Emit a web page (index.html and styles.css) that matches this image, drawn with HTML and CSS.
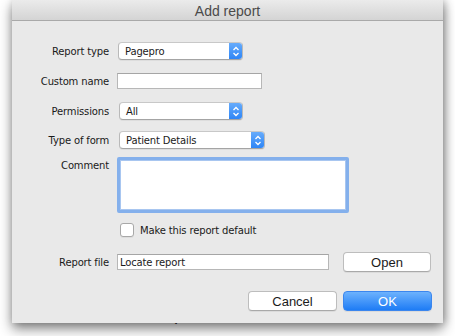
FILE: index.html
```html
<!DOCTYPE html>
<html>
<head>
<meta charset="utf-8">
<link rel="stylesheet" href="styles.css">
</head>
<body>
<div class="stage">
  <div class="dialog">
    <div class="titlebar">Add report</div>
    <div class="content">
      <div class="row r1">
        <label class="lbl">Report type</label>
        <div class="select w125"><span class="val">Pagepro</span><span class="arrow"><svg width="8" height="11" viewBox="0 0 8 11"><path d="M1.5 4 L4 1.5 L6.5 4 M1.5 7 L4 9.5 L6.5 7" fill="none" stroke="#fff" stroke-width="1.3"/></svg></span></div>
      </div>
      <div class="row r2">
        <label class="lbl">Custom name</label>
        <div class="input w145"></div>
      </div>
      <div class="row r3">
        <label class="lbl">Permissions</label>
        <div class="select w124 sh1"><span class="val">All</span><span class="arrow"><svg width="8" height="11" viewBox="0 0 8 11"><path d="M1.5 4 L4 1.5 L6.5 4 M1.5 7 L4 9.5 L6.5 7" fill="none" stroke="#fff" stroke-width="1.3"/></svg></span></div>
      </div>
      <div class="row r4">
        <label class="lbl">Type of form</label>
        <div class="select w146 sh1"><span class="val">Patient Details</span><span class="arrow"><svg width="8" height="11" viewBox="0 0 8 11"><path d="M1.5 4 L4 1.5 L6.5 4 M1.5 7 L4 9.5 L6.5 7" fill="none" stroke="#fff" stroke-width="1.3"/></svg></span></div>
      </div>
      <div class="row r5">
        <label class="lbl top">Comment</label>
        <div class="textarea"></div>
      </div>
      <div class="row r6">
        <span class="lbl"></span>
        <span class="check"></span>
        <span class="checktext">Make this report default</span>
      </div>
      <div class="row r7">
        <label class="lbl">Report file</label>
        <div class="input w212"><span class="val">Locate report</span></div>
        <button class="btn open">Open</button>
      </div>
      <div class="row r8">
        <button class="btn cancel">Cancel</button>
        <button class="btn ok">OK</button>
      </div>
    </div>
  </div>
  <div class="under">
    <span class="u1">Item shelf life in days</span>
    <span class="u2">312</span>
  </div>
</div>
</body>
</html>
```

FILE: styles.css
```css
html, body {
  margin: 0;
  padding: 0;
  background: #ffffff;
  width: 455px;
  height: 336px;
  overflow: hidden;
}
.stage {
  position: relative;
  width: 455px;
  height: 336px;
}
.dialog {
  position: relative;
  z-index: 2;
  margin-left: 12px;
  width: 431px;
  height: 323px;
  background: #e9e9e9;
  box-shadow: 0 6px 12px rgba(0,0,0,0.45), 2px 0 8px rgba(0,0,0,0.25);
  font-family: "DejaVu Sans", "Liberation Sans", sans-serif;
  font-size: 10px;
  letter-spacing: -0.15px;
  color: #1a1a1a;
}
.titlebar {
  height: 20px;
  border-bottom: 1px solid #a9a9a9;
  background: linear-gradient(#ebebeb, #d4d4d4);
  text-align: center;
  font-family: "Liberation Sans", Arial, sans-serif;
  font-size: 14px;
  letter-spacing: 0;
  line-height: 22px;
  color: #4a4a4a;
}
.content {
  padding-top: 21px;
}
.row {
  display: flex;
  align-items: center;
}
.lbl {
  width: 97px;
  text-align: right;
  margin-right: 8px;
  flex: none;
  white-space: nowrap;
}
.lbl.top {
  align-self: flex-start;
  padding-top: 3px;
}
.r1 { height: 18px; }
.r2 { height: 16px; margin-top: 13px; }
.r3 { height: 18px; margin-top: 13px; }
.r4 { height: 18px; margin-top: 11px; }
.r5 { height: 56px; margin-top: 8px; align-items: flex-start; }
.r6 { height: 14px; margin-top: 10px; }
.r7 { height: 20px; margin-top: 15px; }
.r8 { height: 20px; margin-top: 19px; justify-content: flex-end; padding-right: 11px; gap: 6px; }

.select {
  box-sizing: border-box;
  height: 18px;
  display: flex;
  align-items: center;
  justify-content: space-between;
  background: #fff;
  border: 1px solid #b9b9b9;
  border-top-color: #c8c8c8;
  border-bottom-color: #a4a4a4;
  border-radius: 4px;
  box-shadow: 0 1px 0 rgba(0,0,0,0.05);
  margin-left: 1px;
  overflow: hidden;
}
.sh1 { margin-left: 2px; }
.select .val {
  padding-left: 6px;
}
.arrow {
  width: 14px;
  height: 18px;
  margin-right: -1px;
  background: linear-gradient(#6aaefc, #2a83f6);
  display: flex;
  align-items: center;
  justify-content: center;
  border-radius: 0 4px 4px 0;
}
.w125 { width: 125px; }
.w124 { width: 124px; }
.w146 { width: 146px; }
.input {
  box-sizing: border-box;
  height: 16px;
  background: #fff;
  border: 1px solid #b7b7b7;
  border-top-color: #a5a5a5;
  display: flex;
  align-items: center;
}
.input .val { padding-left: 2px; }
.w145 { width: 145px; }
.w212 { width: 212px; }
.textarea {
  box-sizing: border-box;
  width: 232px;
  height: 56px;
  background: #fff;
  border: 3px solid #84b0ec;
  border-radius: 2px;
  box-shadow: inset 0 0 0 1px #a8c6f0;
}
.check {
  box-sizing: border-box;
  width: 14px;
  height: 14px;
  margin-left: 3px;
  background: #fff;
  border: 1px solid #a8a8a8;
  border-radius: 3px;
  box-shadow: 0 1px 0 rgba(0,0,0,0.05);
}
.checktext {
  margin-left: 6px;
}
.btn {
  box-sizing: border-box;
  height: 20px;
  width: 89px;
  padding: 0;
  font-family: "Liberation Sans", Arial, sans-serif;
  font-size: 13px;
  letter-spacing: 0;
  color: #1a1a1a;
  background: #fff;
  border: 1px solid #bdbdbd;
  border-bottom-color: #a9a9a9;
  border-radius: 4px;
  box-shadow: 0 1px 0 rgba(0,0,0,0.06);
}
.open { margin-left: 14px; width: 88px; }
.ok {
  color: #fff;
  border: 1px solid #3b86ee;
  background: linear-gradient(#6db2fd, #1e7cf5);
}
.under {
  position: relative;
  z-index: 1;
  margin-top: -10px;
  display: flex;
  font-family: "DejaVu Sans", sans-serif;
  font-size: 10px;
  color: #222;
}
.u1 { margin-left: 78px; }
.u2 { margin-left: 226px; }
```
